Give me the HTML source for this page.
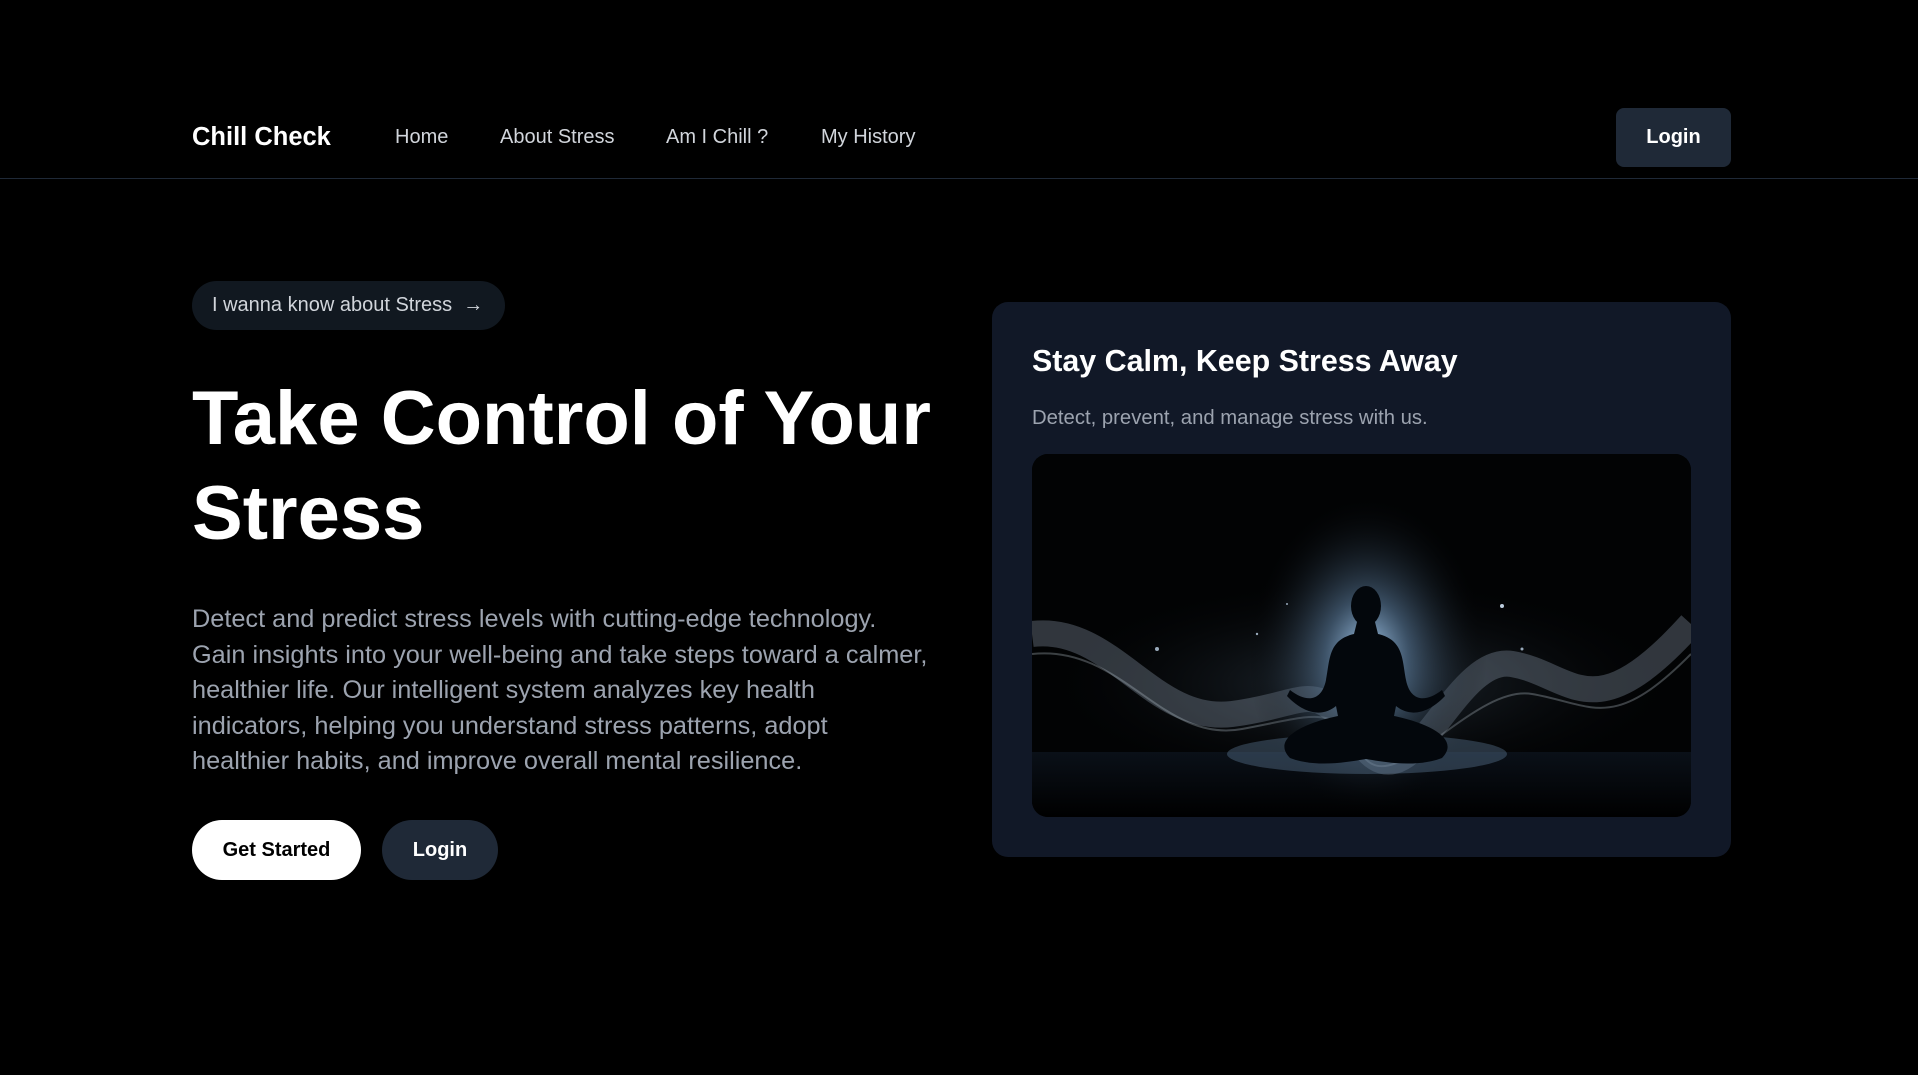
<!DOCTYPE html>
<html><head><meta charset="utf-8"><style>
*{margin:0;padding:0;box-sizing:border-box}
body{width:1918px;height:1075px;background:#000;font-family:"Liberation Sans",Arial,sans-serif;color:#fff;position:relative;overflow:hidden}
.abs{position:absolute}
.nav a{position:absolute;top:126px;font-size:20px;color:#d1d5db;white-space:nowrap}
.btn{position:absolute;display:flex;align-items:center;justify-content:center;font-weight:bold;font-size:20px}
.p div{white-space:nowrap}
</style></head><body>
<div class="abs" style="left:192px;top:123px;font-size:25.5px;font-weight:bold">Chill Check</div>
<div class="nav"><a style="left:395px">Home</a><a style="left:500px">About Stress</a><a style="left:666px">Am I Chill ?</a><a style="left:821px">My History</a></div>
<div class="btn" style="left:1616px;top:108px;width:115px;height:59px;background:#1f2937;border-radius:8px">Login</div>
<div class="abs" style="left:0;top:178px;width:1918px;height:1px;background:#1f2937"></div>

<div class="abs" style="left:192px;top:281px;width:313px;height:49px;background:#111820;border-radius:25px;font-size:20px;color:#d1d5db;padding:13px 0 0 20px;white-space:nowrap">I wanna know about Stress&nbsp;&nbsp;<span style="font-size:20px">→</span></div>
<div class="abs" style="left:192px;top:371px;font-size:76px;font-weight:bold;line-height:95px;white-space:nowrap">Take Control of Your<br>Stress</div>
<div class="abs p" style="left:192px;top:602px;font-size:25.3px;line-height:35.5px;color:#9ca3af">
<div>Detect and predict stress levels with cutting-edge technology.</div>
<div>Gain insights into your well-being and take steps toward a calmer,</div>
<div>healthier life. Our intelligent system analyzes key health</div>
<div>indicators, helping you understand stress patterns, adopt</div>
<div>healthier habits, and improve overall mental resilience.</div>
</div>
<div class="btn" style="left:192px;top:820px;width:169px;height:60px;background:#fff;color:#000;border-radius:30px">Get Started</div>
<div class="btn" style="left:382px;top:820px;width:116px;height:60px;background:#1f2937;border-radius:30px">Login</div>

<div class="abs" style="left:992px;top:302px;width:739px;height:555px;background:#111827;border-radius:16px"></div>
<div class="abs" style="left:1032px;top:344px;font-size:30.4px;font-weight:bold;white-space:nowrap">Stay Calm, Keep Stress Away</div>
<div class="abs" style="left:1032px;top:407px;font-size:20.3px;color:#9ca3af;white-space:nowrap">Detect, prevent, and manage stress with us.</div>
<div class="abs" style="left:1032px;top:454px;width:659px;height:363px;border-radius:16px;overflow:hidden;background:#000">
<svg width="659" height="363" viewBox="0 0 659 363">
<defs>
<radialGradient id="g" cx="0.5" cy="0.5" r="0.5"><stop offset="0" stop-color="#a8cdf0" stop-opacity="1"/><stop offset="0.35" stop-color="#5a7a9a" stop-opacity="0.6"/><stop offset="1" stop-color="#000" stop-opacity="0"/></radialGradient>
<radialGradient id="g2" cx="0.5" cy="0.5" r="0.5"><stop offset="0" stop-color="#3a4a5a" stop-opacity="0.6"/><stop offset="1" stop-color="#000" stop-opacity="0"/></radialGradient>
<linearGradient id="fl" x1="0" y1="0" x2="0" y2="1"><stop offset="0" stop-color="#0a1018"/><stop offset="1" stop-color="#000"/></linearGradient>
</defs>
<rect width="659" height="363" fill="#020304"/>
<ellipse cx="330" cy="230" rx="330" ry="110" fill="url(#g2)"/>
<rect x="0" y="298" width="659" height="65" fill="url(#fl)"/>
<path d="M0 180 C80 170 120 270 200 260 S 280 220 330 290 S 420 200 480 210 S 560 280 659 170" stroke="#8a98a8" stroke-opacity="0.35" stroke-width="26" fill="none"/>
<path d="M0 200 C90 190 130 290 210 275 S 300 250 330 300 S 440 230 500 240 S 580 280 659 200" stroke="#c0ccd8" stroke-opacity="0.3" stroke-width="2" fill="none"/>
<ellipse cx="335" cy="200" rx="120" ry="160" fill="url(#g)"/>
<ellipse cx="335" cy="300" rx="140" ry="20" fill="#6a8aa8" fill-opacity="0.35"/>
<g fill="#03070c">
<ellipse cx="334" cy="152" rx="15" ry="20"/>
<path d="M325 168 L343 168 L346 180 C372 186 370 206 374 226 C378 246 392 250 410 236 L413 242 C394 262 376 262 364 252 L362 262 C400 270 428 286 410 304 C384 314 352 308 334 305 C316 308 284 314 258 304 C240 286 268 270 306 262 L304 252 C292 262 274 262 255 242 L258 236 C276 250 290 246 294 226 C298 206 296 186 322 180 Z"/>
</g>
<circle cx="125" cy="195" r="2" fill="#9ab"/><circle cx="470" cy="152" r="2" fill="#bcd"/><circle cx="225" cy="180" r="1.2" fill="#9ab"/><circle cx="490" cy="195" r="1.5" fill="#9ab"/><circle cx="255" cy="150" r="1" fill="#9ab"/>
</svg></div>
</body></html>
